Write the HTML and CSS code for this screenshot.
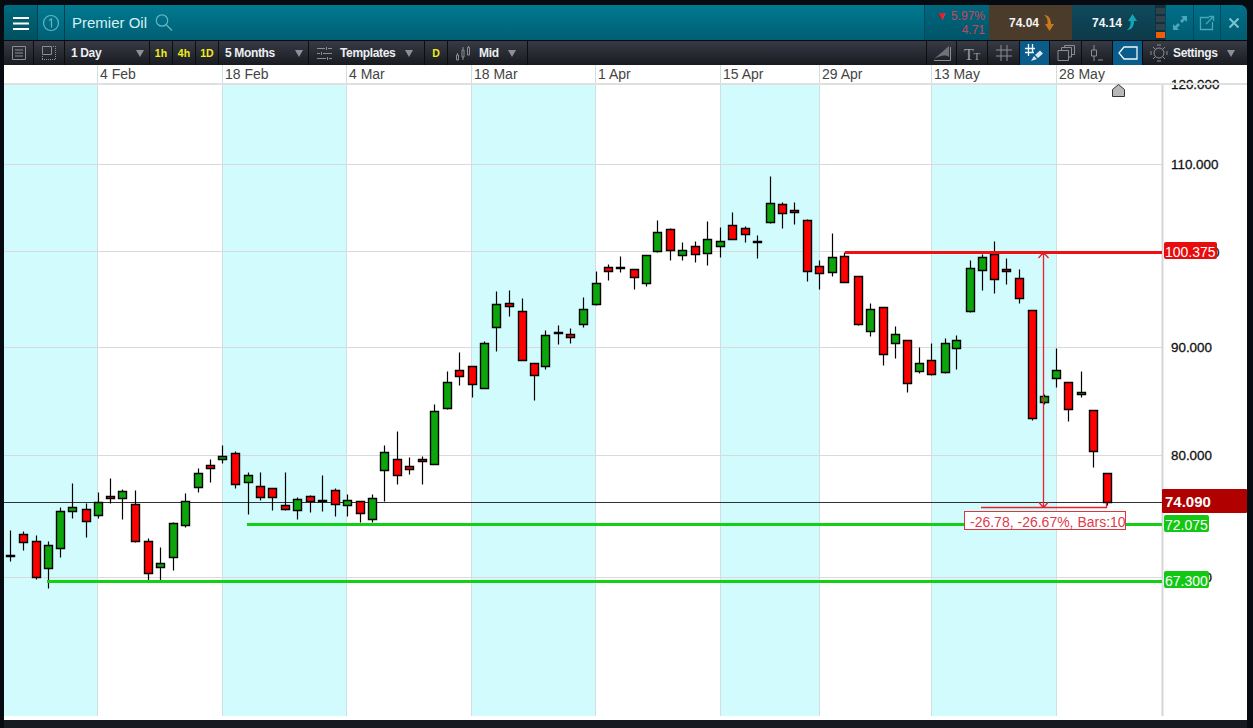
FILE: index.html
```html
<!DOCTYPE html>
<html lang="en">
<head>
<meta charset="utf-8">
<title>Premier Oil</title>
<link rel="stylesheet" href="styles.css">
</head>
<body>
<div class="window">
  <header class="titlebar">
    <div class="tb-cell tb-menu">
      <svg width="16" height="14" viewBox="0 0 16 14"><path class="i-white2" d="M0 2H16M0 7.5H16M0 13H16"/></svg>
    </div>
    <div class="tb-cell tb-num">
      <svg width="18" height="18" viewBox="0 0 18 18"><circle class="i-teal" cx="9" cy="9" r="7.5"/><path class="i-teal" d="M7 6.5L9.5 4.8V13.5"/></svg>
    </div>
    <div class="tb-name">
      <span class="instrument">Premier Oil</span>
      <svg width="20" height="20" viewBox="0 0 20 20"><circle class="i-teal" cx="8" cy="7.5" r="5.7"/><path class="i-teal" d="M12 11.5L18 17.5"/></svg>
    </div>
    <div class="tb-change">
      <div class="chg-pct"><span class="chg-arrow">▼</span> 5.97%</div>
      <div class="chg-abs">4.71</div>
    </div>
    <div class="tb-price tb-sell">
      <span>74.04</span>
      <svg width="10" height="17" viewBox="0 0 10 17"><path class="fill-orange" d="M0 1C5 1 7 5 7 10H10L5.5 17L1 10H3.5C4 6 3 3 0 1Z"/></svg>
    </div>
    <div class="tb-price tb-buy">
      <span>74.14</span>
      <svg width="10" height="17" viewBox="0 0 10 17"><path class="fill-teal" d="M0 16C5 16 7 12 7 7H10L5.5 0L1 7H3.5C4 11 3 14 0 16Z"/></svg>
    </div>
    <div class="tb-level">
      <span class="lvl"></span><span class="lvl"></span><span class="lvl"></span><span class="lvl lvl-on"></span>
    </div>
    <div class="tb-cell tb-win tb-win-wide">
      <svg width="16" height="16" viewBox="0 0 16 16"><path class="fill-teal2" d="M9 1H15V7L13 5L10 8L8 6L11 3ZM1 15V9L3 11L6 8L8 10L5 13L7 15Z"/></svg>
    </div>
    <div class="tb-cell tb-win">
      <svg width="16" height="16" viewBox="0 0 16 16"><path class="i-teal2" d="M10 2.5H1.5V14.5H13.5V7M7 9L14 2M10 1.5H14.5V6"/></svg>
    </div>
    <div class="tb-cell tb-win">
      <svg width="12" height="12" viewBox="0 0 12 12"><path class="i-close" d="M1.5 1.5L10.5 10.5M10.5 1.5L1.5 10.5"/></svg>
    </div>
  </header>

  <nav class="toolbar">
    <div class="tool w30">
      <svg width="14" height="14" viewBox="0 0 14 14"><path class="i-grey" d="M.5 .5H13.5V13.5H.5ZM3 4H11M3 7H11M3 10H11"/></svg>
    </div>
    <div class="tool w31">
      <svg width="14" height="14" viewBox="0 0 14 14"><path class="i-grey" d="M.5 .5H9.5V8.5H.5Z"/><path class="i-dots" d="M11 .5H14M13.5 2V13.5H0M.5 10V13"/></svg>
    </div>
    <div class="tool select w85"><span>1 Day</span><i class="caret"></i></div>
    <div class="tool quick w23">1h</div>
    <div class="tool quick w23">4h</div>
    <div class="tool quick w23">1D</div>
    <div class="tool select w90"><span>5 Months</span><i class="caret"></i></div>
    <div class="tool select select-icon w116">
      <svg width="15" height="14" viewBox="0 0 15 14"><path class="i-grey" d="M0 2.5H8M11 2.5H15M0 7.5H3M6 7.5H15M0 12.5H9M12 12.5H15M9.5 1V4M4.5 6V9M10.5 11V14"/></svg>
      <span>Templates</span><i class="caret"></i>
    </div>
    <div class="tool quick w23">D</div>
    <div class="tool select select-icon w80">
      <svg width="15" height="15" viewBox="0 0 15 15"><path class="i-grey" d="M2.5 9V14H.5V9ZM8 4V11H6V4ZM13.5 1.5V9H11.5V1.5ZM7 1V4M7 11V14M12.5 0V1.5M1.5 7V9"/></svg>
      <span>Mid</span><i class="caret"></i>
    </div>
    <div class="tool-fill"></div>
    <div class="tool w30">
      <svg width="18" height="16" viewBox="0 0 18 16"><path class="fill-grey" d="M1 14L16 1V12C12 9 7 11 1 14Z"/><path class="i-grey" d="M1 15.5H17.5V2"/></svg>
    </div>
    <div class="tool w31 tt"><span class="tt-big">T</span><span class="tt-small">T</span></div>
    <div class="tool w32">
      <svg width="16" height="16" viewBox="0 0 16 16"><path class="i-grey" d="M0 5H16M0 11H16M5 0V16M11 0V16"/></svg>
    </div>
    <div class="tool w30 active">
      <svg width="20" height="18" viewBox="0 0 20 18"><path class="i-white" d="M0 4.5H10M0 8.5H9M3.5 0V12M7.5 0V9"/><path class="fill-white" d="M10 11L15 6.5L18 9.5L13 14ZM6 17L9 12L12 15Z"/></svg>
    </div>
    <div class="tool w32">
      <svg width="18" height="16" viewBox="0 0 18 16"><path class="i-grey" d="M1 5.5H11.5V15.5H1ZM4.5 5.5V2.5H14.5V12H11.5M7.5 2.5V.5H17.5V9.5H14.5"/></svg>
    </div>
    <div class="tool w31">
      <svg width="14" height="18" viewBox="0 0 14 18"><path class="i-grey" d="M1.5 6H6.5V12H1.5ZM4 1V6M4 12V17M8 16H13"/></svg>
    </div>
    <div class="tool w30 active">
      <svg width="20" height="14" viewBox="0 0 20 14"><path class="i-white" d="M19 1H6L1 7L6 13H19Z"/></svg>
    </div>
    <div class="tool settings">
      <svg width="18" height="18" viewBox="0 0 18 18"><circle class="i-grey" cx="9" cy="9" r="5"/><path class="i-grey" d="M7 1H11M7 17H11M1 7V11M17 7V11M3 3L5.5 5.5M15 3L12.5 5.5M3 15L5.5 12.5M15 15L12.5 12.5"/></svg>
      <span>Settings</span><i class="caret"></i>
    </div>
  </nav>

  <main class="chart">
    <svg class="plot" width="1243" height="655" viewBox="4 65 1243 655">
      <rect class="band" x="4" y="85" width="93" height="631"/>
      <rect class="band" x="222" y="85" width="124" height="631"/>
      <rect class="band" x="471" y="85" width="124" height="631"/>
      <rect class="band" x="720" y="85" width="99" height="631"/>
      <rect class="band" x="931" y="85" width="125" height="631"/>

      <path class="vgrid" d="M97.5 65V716M222.5 65V716M346.5 65V716M471.5 65V716M595.5 65V716M720.5 65V716M819.5 65V716M931.5 65V716M1056.5 65V716"/>
      <path class="hgrid" d="M4 164.5H1162M4 251.5H1162M4 347.5H1162M4 455.5H1162M4 577.5H1162"/>
      <path class="axis" d="M1162.5 85V716"/>

      <g class="dates">
        <text x="100" y="79">4 Feb</text>
        <text x="225" y="79">18 Feb</text>
        <text x="349" y="79">4 Mar</text>
        <text x="474" y="79">18 Mar</text>
        <text x="598" y="79">1 Apr</text>
        <text x="723" y="79">15 Apr</text>
        <text x="822" y="79">29 Apr</text>
        <text x="934" y="79">13 May</text>
        <text x="1059" y="79">28 May</text>
      </g>

      <g class="prices">
        <text x="1171" y="89">120.000</text>
        <text x="1171" y="169">110.000</text>
        <text x="1171" y="257">100.000</text>
        <text x="1171" y="352">90.000</text>
        <text x="1171" y="460">80.000</text>
        <text x="1171" y="582">70.000</text>
      </g>
      <rect class="rule" x="4" y="83" width="1243" height="2"/>
      <path class="home" d="M1112.5 96.5V89.5L1118.5 84.5L1124.5 89.5V96.5Z"/>

      <path class="price-line" d="M4 502.5H1162"/>

      <g class="candles">
        <path class="wicks" d="M10 530V561M23 531V550M36 535V579M48 541V588M60 507V557M72 483V518M86 503V537M98 492V518M110 478V503M122 489V519M135 490V542M148 538V580M160 547V580M173 522V570M185 493V527M198 468V492M210 459V482M222 445V463M235 451V488M248 472V514M260 472V500M272 488V510M285 472V510M297 497V519M310 495V512M322 475V511M335 488V516M347 494V516M360 501V522M372 494V522M384 445V501M397 431V484M409 457V474M422 456V484M434 404V464M447 371V409M459 352V385M472 366V397M484 341V388M496 291V351M509 290V316M522 298V360M534 363V400M545 330V369M558 325V344M570 328V343M583 297V327M596 271V305M608 264V280M620 256V272M634 269V289M646 255V286M657 220V252M670 228V260M682 242V260M695 241V262M707 221V265M720 227V257M732 212V239M745 226V242M757 235V258M770 176V223M782 202V228M794 202V224M807 219V281M819 260V289M832 233V276M844 252V282M858 276V325M870 303V336M883 307V365M895 326V358M907 340V392M919 347V373M931 343V375M945 338V373M956 335V369M970 260V312M982 254V290M994 241V293M1006 258V284M1019 269V303M1032 310V420M1044 394V404M1056 348V387M1068 382V421M1081 371V397M1093 410V467M1107 473V505"/>
        <path class="up" d="M44 545h8V568h-8zM56 511h8V548h-8zM68 507h8V511h-8zM94 502h8V515h-8zM118 491h8V498h-8zM156 563h8V567h-8zM169 523h8V557h-8zM181 501h8V525h-8zM194 473h8V487h-8zM218 456h8V459h-8zM244 475h8V482h-8zM293 499h8V510h-8zM343 500h8V505h-8zM368 498h8V519h-8zM380 452h8V470h-8zM430 411h8V464h-8zM443 382h8V408h-8zM480 343h8V388h-8zM492 304h8V327h-8zM541 335h8V366h-8zM579 309h8V324h-8zM592 283h8V304h-8zM642 255h8V283h-8zM653 232h8V251h-8zM678 250h8V255h-8zM703 239h8V253h-8zM716 241h8V246h-8zM766 203h8V222h-8zM828 257h8V272h-8zM866 309h8V331h-8zM891 334h8V343h-8zM915 363h8V371h-8zM941 343h8V372h-8zM952 340h8V348h-8zM966 268h8V311h-8zM978 257h8V270h-8zM1040 396h8V402h-8zM1052 370h8V378h-8zM1077 392h8V394h-8z"/>
        <path class="down" d="M6 555h8V556h-8zM19 534h8V542h-8zM32 541h8V577h-8zM82 509h8V521h-8zM106 496h8V498h-8zM131 504h8V541h-8zM144 541h8V573h-8zM206 465h8V468h-8zM231 453h8V484h-8zM256 486h8V497h-8zM268 488h8V497h-8zM281 505h8V509h-8zM306 496h8V501h-8zM318 500h8V501h-8zM331 490h8V504h-8zM356 501h8V513h-8zM393 459h8V475h-8zM405 466h8V469h-8zM418 459h8V461h-8zM455 370h8V376h-8zM468 366h8V384h-8zM505 303h8V306h-8zM518 311h8V360h-8zM530 363h8V375h-8zM554 332h8V333h-8zM566 334h8V337h-8zM604 267h8V271h-8zM616 267h8V268h-8zM630 269h8V277h-8zM666 229h8V250h-8zM691 246h8V254h-8zM728 225h8V239h-8zM741 228h8V234h-8zM753 241h8V242h-8zM778 204h8V213h-8zM790 210h8V212h-8zM803 220h8V271h-8zM815 266h8V273h-8zM840 256h8V282h-8zM854 276h8V324h-8zM879 307h8V354h-8zM903 340h8V383h-8zM927 360h8V374h-8zM990 254h8V279h-8zM1002 269h8V271h-8zM1015 278h8V298h-8zM1028 310h8V418h-8zM1064 382h8V409h-8zM1089 410h8V451h-8zM1103 473h8V502h-8z"/>
      </g>

      <rect class="lvl-red" x="845" y="251" width="317" height="3"/>
      <rect class="lvl-green" x="247" y="523" width="915" height="3"/>
      <rect class="lvl-green" x="47" y="580" width="1115" height="3"/>

      <path class="measure" d="M1043.5 252V507M1038.5 258L1043.5 252.5L1048.5 258M1038.5 502L1043.5 507.5L1048.5 502M981 507.5H1106.5V503"/>
      <rect class="measure-box" x="964.5" y="511.5" width="161" height="18"/>
      <text class="measure-text" x="970" y="527">-26.78, -26.67%, Bars:10</text>

      <rect class="tag-red" x="1164" y="242" width="53" height="17" rx="2"/>
      <text class="tag-text" x="1165" y="257">100.375</text>
      <rect class="tag-last" x="1162" y="489" width="85" height="24" rx="1"/>
      <text class="tag-last-text" x="1165" y="507">74.090</text>
      <rect class="tag-green" x="1164" y="515" width="45" height="17" rx="2"/>
      <text class="tag-text" x="1165" y="530">72.075</text>
      <rect class="tag-green" x="1164" y="571" width="45" height="17" rx="2"/>
      <text class="tag-text" x="1165" y="586">67.300</text>
    </svg>
  </main>
  <footer class="statusbar"></footer>
</div>
</body>
</html>
```
FILE: styles.css
```css
* { box-sizing: border-box; }
html, body { margin: 0; height: 100%; overflow: hidden; }
body { background: #060b11; font-family: "Liberation Sans", Arial, sans-serif; }

.window {
  display: flex;
  flex-direction: column;
  width: 1253px;
  height: 728px;
  padding: 5px 6px 0 4px;
}

/* title bar */
.titlebar {
  display: flex;
  align-items: stretch;
  height: 35px;
  flex: none;
  border-radius: 3px 7px 0 0;
  overflow: hidden;
  background: linear-gradient(#007a90, #005e74);
  color: #fff;
}
.tb-cell { display: flex; align-items: center; justify-content: center; flex: none; }
.tb-menu { width: 34px; background: linear-gradient(#006a7e, #00505f); border-right: 1px solid #003f4e; }
.tb-num { width: 27px; border-right: 1px solid #003f4e; }
.tb-name { flex: 1; display: flex; align-items: center; gap: 7px; padding-left: 7px; }
.instrument { font-size: 15px; color: #d5f0f4; }
.tb-change {
  width: 65px;
  flex: none;
  padding: 4px 4px 0 0;
  text-align: right;
  font-size: 12px;
  line-height: 14px;
  color: #c8465c;
  border-left: 1px solid #004a5c;
  background: linear-gradient(#00687e, #005468);
}
.chg-arrow { color: #e81c2c; font-size: 12px; }
.tb-price {
  flex: none;
  width: 83px;
  display: flex;
  align-items: center;
  justify-content: flex-end;
  gap: 5px;
  padding-right: 18px;
  font-size: 12px;
  font-weight: bold;
  color: #f4f4f4;
}
.tb-sell { background: #4b3b2b; }
.tb-buy { background: linear-gradient(#0f4a5c, #0c3a4a); }
.tb-level {
  flex: none;
  width: 10px;
  display: flex;
  flex-direction: column;
  gap: 2px;
  padding: 3px 0 2px 1px;
  background: #0c3340;
}
.lvl { flex: 1; background: #33414a; }
.lvl-on { background: #f25c05; }
.tb-win { width: 27px; border-left: 1px solid #00485a; background: linear-gradient(#00708a, #005c70); }
.tb-win-wide { width: 28px; }

/* toolbar */
.toolbar {
  display: flex;
  align-items: stretch;
  height: 24px;
  flex: none;
  margin-top: 1px;
  background: linear-gradient(#383b44, #191b21);
  color: #eceff2;
  font-size: 12px;
  font-weight: bold;
  letter-spacing: -.35px;
}
.tool {
  display: flex;
  align-items: center;
  justify-content: center;
  flex: none;
  border-right: 1px solid #0b0d11;
}
.tool-fill { flex: 1; border-right: 1px solid #0b0d11; }
.w23 { width: 23px; }
.w30 { width: 30px; }
.w31 { width: 31px; }
.w32 { width: 32px; }
.w80 { width: 80px; }
.w85 { width: 85px; }
.w90 { width: 90px; }
.w116 { width: 116px; }
.select { justify-content: flex-start; padding: 0 5px 0 6px; gap: 8px; }
.select-icon { padding: 0 11px 0 8px; }
.select .caret { margin-left: auto; }
.quick { color: #f2ee1a; font-size: 10.5px; letter-spacing: 0; }
.caret {
  width: 0;
  height: 0;
  border-left: 4px solid transparent;
  border-right: 4px solid transparent;
  border-top: 7px solid #8d9096;
}
.active { background: #0a5d8a; }
.tt { font-family: "Liberation Serif", serif; font-weight: normal; color: #9a9da2; align-items: baseline; padding-top: 5px; }
.tt-big { font-size: 16px; }
.tt-small { font-size: 11px; }
.settings { flex: none; width: 104px; justify-content: flex-start; padding: 0 12px 0 7px; gap: 5px; border-right: 0; }
.settings .caret { margin-left: auto; }

/* icons */
svg { display: block; flex: none; }
.i-white2 { fill: none; stroke: #fff; stroke-width: 2; }
.i-teal { fill: none; stroke: #63b7c4; stroke-width: 1.2; }
.i-teal2 { fill: none; stroke: #4aa6b8; stroke-width: 1.3; }
.i-close { fill: none; stroke: #7ec3cf; stroke-width: 2; }
.i-grey { fill: none; stroke: #8b8e94; stroke-width: 1; }
.i-dots { fill: none; stroke: #8b8e94; stroke-width: 1; stroke-dasharray: 1 1; }
.i-white { fill: none; stroke: #f2f6f8; stroke-width: 1.3; }
.fill-white { fill: #d8e8f0; }
.fill-grey { fill: #6f7278; }
.fill-orange { fill: #c9791a; }
.fill-teal { fill: #14a6b8; }
.fill-teal2 { fill: #4aa6b8; }

/* chart */
.chart { flex: none; height: 655px; background: #fff; }
.plot { font-family: "Liberation Sans", Arial, sans-serif; }
.band { fill: #d1fbfd; }
.vgrid { fill: none; stroke: #cfe0e0; stroke-width: 1; }
.hgrid { fill: none; stroke: #dadada; stroke-width: 1; }
.axis { fill: none; stroke: #d6d6d6; stroke-width: 2; }
.rule { fill: #e0e0e0; }
.dates text { font-size: 14px; fill: #444; }
.prices text { font-size: 13.4px; fill: #111; stroke: #111; stroke-width: .3px; }
.home { fill: #b8b8b8; stroke: #333; stroke-width: 1; }
.price-line { fill: none; stroke: #333; stroke-width: 1; }
.candles { transform: translate(.5px, .5px); }
.wicks { fill: none; stroke: #000; stroke-width: 1.2; }
.up { fill: #0ca50c; stroke: #000; stroke-width: 1.4; }
.down { fill: #ff0000; stroke: #000; stroke-width: 1.4; }
.lvl-red { fill: #ee1111; }
.lvl-green { fill: #14d014; }
.measure { fill: none; stroke: #e8202c; stroke-width: 1.3; }
.measure-box { fill: #fff; stroke: #e2343c; stroke-width: 1; }
.measure-text { font-size: 14px; fill: #e03a4c; }
.tag-red { fill: #e80c0c; }
.tag-green { fill: #12c812; }
.tag-last { fill: #b00000; }
.tag-text { font-size: 14px; fill: #fff; }
.tag-last-text { font-size: 15px; font-weight: bold; fill: #fff; }

.statusbar { flex: 1; background: #171b21; }
```
